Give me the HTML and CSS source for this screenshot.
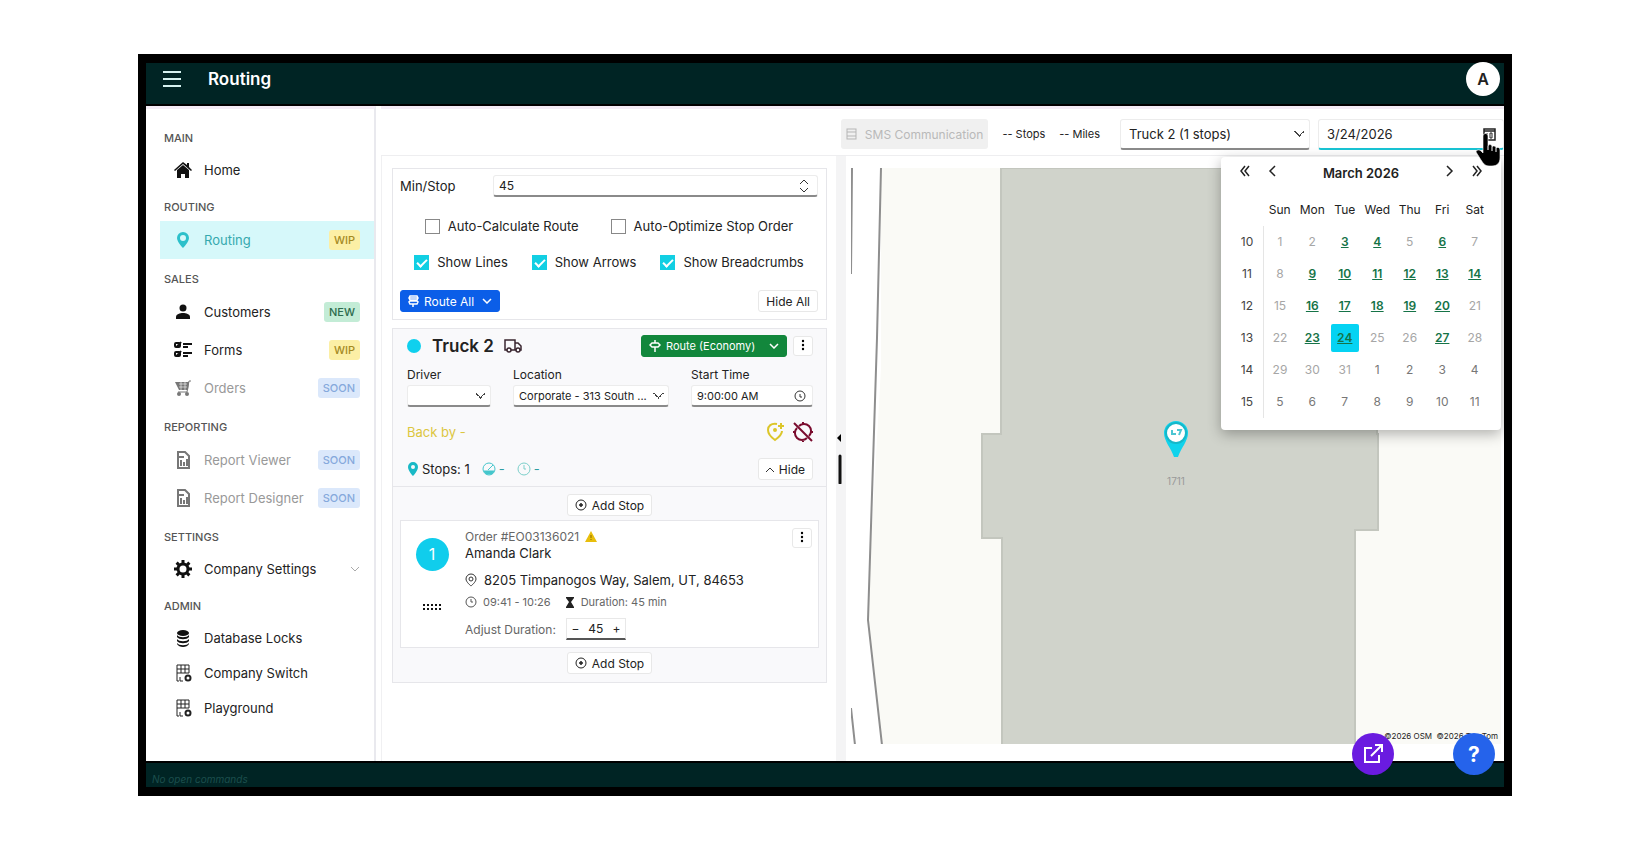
FILE: index.html
```html
<!DOCTYPE html>
<html lang="en">
<head>
    <meta charset="UTF-8">
    <meta name="viewport" content="width=device-width, initial-scale=1.0">
    <title>Routing</title>

    <link rel="stylesheet" href="styles.css">
</head>
<body>
  <div class="app">

    <header class="header">
      <button type="button" class="menu-btn" aria-label="Menu">
        <svg width="20" height="18" viewBox="0 0 20 18" stroke="#d5f2f0" stroke-width="2"><path d="M1 2h18M1 9h18M1 16h18"/></svg>
      </button>
      <h1>Routing</h1>
      <button type="button" class="avatar">A</button>
    </header>

    <div class="body">
      <nav class="sidebar">
        <h2>MAIN</h2>
        <a href="#" class="item">
          <svg class="icon" viewBox="0 0 18 18"><path d="M9 1 0 9l1 1 8-7 8 7 1-1-3-3V2h-2v2z"/><path d="M9 4 3 9v8h4v-4h4v4h4V9z"/></svg>
          <span>Home</span>
        </a>

        <h2>ROUTING</h2>
        <a href="#" class="item tagged active">
          <svg class="icon" viewBox="0 0 18 18"><path fill-rule="evenodd" d="M9 1a6 6 0 0 0-6 6c0 4 6 10 6 10s6-6 6-10a6 6 0 0 0-6-6zm0 3a3 3 0 1 1 0 6 3 3 0 0 1 0-6z"/></svg>
          <span>Routing</span>
          <b class="tag wip">WIP</b>
        </a>

        <h2>SALES</h2>
        <a href="#" class="item tagged">
          <svg class="icon" viewBox="0 0 18 18"><circle cx="9" cy="5" r="3.500"/><path d="M2 16v-2c0-3 4-4 7-4s7 1 7 4v2z"/></svg>
          <span>Customers</span>
          <b class="tag new">NEW</b>
        </a>
        <a href="#" class="item tagged">
          <svg class="icon" viewBox="0 0 18 18"><g fill="none" stroke="#111" stroke-width="2"><rect x="1" y="2" width="5" height="4" rx="1"/><rect x="1" y="11" width="5" height="4" rx="1"/><path d="M3 4l1 1 3-4M3 13l1 1 3-4M9 3h9M9 6h5M9 12h9M9 15h5"/></g></svg>
          <span>Forms</span>
          <b class="tag wip">WIP</b>
        </a>
        <a href="#" class="item tagged disabled">
          <svg class="icon" viewBox="0 0 18 18"><path d="M1 3h14l-1 8H5z"/><path d="M17 2h-2l-2 11H4" fill="none" stroke="#777" stroke-width="1"/><circle cx="5" cy="15" r="2"/><circle cx="13" cy="15" r="2"/><path d="M5 5h8M5 8h8M7 3v8M11 3v8" stroke="#fff" stroke-width=".6"/></svg>
          <span>Orders</span>
          <b class="tag soon">SOON</b>
        </a>

        <h2>REPORTING</h2>
        <a href="#" class="item tagged disabled">
          <svg class="icon" viewBox="0 0 18 18"><g fill="none" stroke="#777" stroke-width="2"><path d="M4 1h7l4 4v12H4zM7 15V9M10 15v-4M13 15V8M4 6h6"/></g></svg>
          <span>Report Viewer</span>
          <b class="tag soon">SOON</b>
        </a>
        <a href="#" class="item tagged disabled">
          <svg class="icon" viewBox="0 0 18 18"><g fill="none" stroke="#777" stroke-width="2"><path d="M4 1h7l4 4v12H4zM7 15V9M10 15v-4M13 15V8M4 6h6"/></g></svg>
          <span>Report Designer</span>
          <b class="tag soon">SOON</b>
        </a>

        <h2>SETTINGS</h2>
        <a href="#" class="item">
          <svg class="icon" viewBox="0 0 18 18"><circle cx="9" cy="9" r="5" fill="none" stroke="#111" stroke-width="3"/><path d="M9 0v4M9 14v4M0 9h4M14 9h4M2.600 2.600l3 3M12.400 12.400l3 3M2.600 15.400l3-3M12.400 5.600l3-3" stroke="#111" stroke-width="3"/></svg>
          <span>Company Settings</span>
          <svg class="chevron" width="10" height="6" viewBox="0 0 10 6" fill="none" stroke="#aaa"><path d="M1 1l4 4 4-4"/></svg>
        </a>

        <h2>ADMIN</h2>
        <a href="#" class="item">
          <svg class="icon" viewBox="0 0 18 18"><ellipse cx="9" cy="4" rx="6" ry="3"/><path d="M3 6c2 3 10 3 12 0v2c-2 3-10 3-12 0zM3 10c2 3 10 3 12 0v2c-2 3-10 3-12 0zM3 14c2 3 10 3 12 0v1c-2 4-10 4-12 0z"/></svg>
          <span>Database Locks</span>
        </a>
        <a href="#" class="item">
          <svg class="icon" viewBox="0 0 18 18"><g fill="none" stroke="#222"><path d="M3 17V1h12v8M3 5h12M3 9h12M7 1v8M11 1v8M3 17h2M6 13v4h3"/><circle cx="14" cy="14" r="2.500" stroke-width="2"/></g></svg>
          <span>Company Switch</span>
        </a>
        <a href="#" class="item">
          <svg class="icon" viewBox="0 0 18 18"><g fill="none" stroke="#222"><path d="M3 17V1h12v8M3 5h12M3 9h12M7 1v8M11 1v8M3 17h2M6 13v4h3"/><circle cx="14" cy="14" r="2.500" stroke-width="2"/></g></svg>
          <span>Playground</span>
        </a>
      </nav>

      <main class="main">
        <div class="toolbar">
          <button type="button" class="sms" disabled>
            <svg width="11" height="12" viewBox="0 0 11 12" fill="none" stroke="#b5b5b5"><rect x="1" y="1" width="9" height="10"/><path d="M1 4h9M1 8h9"/></svg>
            SMS Communication
          </button>
          <span class="stat">-- Stops</span>
          <span class="stat">-- Miles</span>
          <select class="field truck-select" aria-label="Truck">
            <option>Truck 2 (1 stops)</option>
          </select>
          <div class="date">
            <input type="text" class="field date-input" value="3/24/2026" aria-label="Date">
            <button type="button" class="date-btn" aria-label="Open calendar">
              <svg width="13" height="14" viewBox="0 0 13 14" fill="none" stroke="#222"><path d="M1 2h11v11H1zM1 4h11" stroke-width="1.500"/><path d="M4 6v5M7 6h2v5H7z"/></svg>
            </button>

            <div class="calendar">
              <div class="cal-head">
                <button type="button" aria-label="Previous year"><svg width="12" height="12" viewBox="0 0 12 12"><path d="M6 1 2 6l4 5M10 1 6 6l4 5"/></svg></button>
                <button type="button" aria-label="Previous month"><svg width="12" height="12" viewBox="0 0 12 12"><path d="M8 1 3 6l5 5"/></svg></button>
                <strong>March 2026</strong>
                <button type="button" aria-label="Next month"><svg width="12" height="12" viewBox="0 0 12 12"><path d="M4 1l5 5-5 5"/></svg></button>
                <button type="button" aria-label="Next year"><svg width="12" height="12" viewBox="0 0 12 12"><path d="M2 1l4 5-4 5M6 1l4 5-4 5"/></svg></button>
              </div>
              <table>
                <thead>
                  <tr><th></th><th>Sun</th><th>Mon</th><th>Tue</th><th>Wed</th><th>Thu</th><th>Fri</th><th>Sat</th></tr>
                </thead>
                <tbody>
                  <tr><th>10</th><td>1</td><td>2</td><td class="on">3</td><td class="on">4</td><td>5</td><td class="on">6</td><td>7</td></tr>
                  <tr><th>11</th><td>8</td><td class="on">9</td><td class="on">10</td><td class="on">11</td><td class="on">12</td><td class="on">13</td><td class="on">14</td></tr>
                  <tr><th>12</th><td>15</td><td class="on">16</td><td class="on">17</td><td class="on">18</td><td class="on">19</td><td class="on">20</td><td>21</td></tr>
                  <tr><th>13</th><td>22</td><td class="on">23</td><td class="on today"><span>24</span></td><td>25</td><td>26</td><td class="on">27</td><td>28</td></tr>
                  <tr><th>14</th><td>29</td><td>30</td><td>31</td><td class="next">1</td><td class="next">2</td><td class="next">3</td><td class="next">4</td></tr>
                  <tr><th>15</th><td class="next">5</td><td class="next">6</td><td class="next">7</td><td class="next">8</td><td class="next">9</td><td class="next">10</td><td class="next">11</td></tr>
                </tbody>
              </table>
            </div>

            <svg class="cursor" viewBox="0 0 27 34"><path d="M7 3a2 2 0 0 1 5 0v10c1-2 4-2 4 1 1-2 4-1 4 1 1-1 4-1 4 2v8c0 5-3 8-8 8h-3c-4 0-6-3-8-6l-5-8c0-2 3-3 5-1l2 2z" stroke="#fff" stroke-width=".6"/><path d="M12 13v4M16 14v4M20 15v4" stroke="#fff" fill="none"/></svg>
          </div>
        </div>

        <div class="content">
          <div class="panel">
            <section class="card options">
              <div class="min-row">
                <label for="min-stop">Min/Stop</label>
                <div class="spin">
                  <input type="text" class="field" id="min-stop" value="45">
                  <svg width="10" height="14" viewBox="0 0 10 14" fill="none" stroke="#333"><path d="M1 5l4-4 4 4M1 9l4 4 4-4"/></svg>
                </div>
              </div>
              <div class="checks wide">
                <label><input type="checkbox"> Auto-Calculate Route</label>
                <label><input type="checkbox"> Auto-Optimize Stop Order</label>
              </div>
              <div class="checks">
                <label><input type="checkbox" checked> Show Lines</label>
                <label><input type="checkbox" checked> Show Arrows</label>
                <label><input type="checkbox" checked> Show Breadcrumbs</label>
              </div>
              <div class="row">
                <button type="button" class="btn blue">
                  <svg width="11" height="12" viewBox="0 0 11 12" fill="none" stroke="#fff"><path d="M2 1h7l1 2-1 2H2L1 3zM2 6h7l1 1-1 2H2L1 7zM5 9v3M1 3h9" stroke-width="1.500"/></svg>
                  Route All
                  <svg class="end" width="10" height="6" viewBox="0 0 10 6" fill="none" stroke="#fff" stroke-width="1.500"><path d="M1 1l4 4 4-4"/></svg>
                </button>
                <button type="button" class="btn">Hide All</button>
              </div>
            </section>

            <section class="card truck">
              <div class="truck-info">
                <div class="row">
                  <i class="dot"></i>
                  <h3>Truck 2</h3>
                  <svg class="truck-icon" width="18" height="14" viewBox="0 0 18 14" fill="none" stroke="#3a2630" stroke-width="1.500"><path d="M3 11H1V1h10v10H7M11 4h3l3 3v4h-1M12 11h-1"/><circle cx="5" cy="11" r="2"/><circle cx="14" cy="11" r="2"/></svg>
                  <button type="button" class="btn green">
                    <svg width="12" height="12" viewBox="0 0 12 12" fill="none" stroke="#fff" stroke-width="1.500"><path d="M3 3h6l2 2-2 2H3L1 5zM6 0v3M6 7v5"/></svg>
                    Route (Economy)
                    <svg class="end" width="10" height="6" viewBox="0 0 10 6" fill="none" stroke="#fff" stroke-width="1.500"><path d="M1 1l4 4 4-4"/></svg>
                  </button>
                  <button type="button" class="kebab" aria-label="Truck menu"><svg width="4" height="12" viewBox="0 0 4 12"><circle cx="2" cy="2" r="1.200"/><circle cx="2" cy="6" r="1.200"/><circle cx="2" cy="10" r="1.200"/></svg></button>
                </div>

                <div class="fields">
                  <div>
                    <label for="driver">Driver</label>
                    <select class="field" id="driver"><option></option></select>
                  </div>
                  <div>
                    <label for="location">Location</label>
                    <select class="field" id="location"><option>Corporate - 313 South ...</option></select>
                  </div>
                  <div>
                    <label for="start">Start Time</label>
                    <div class="spin">
                      <input type="text" class="field" id="start" value="9:00:00 AM">
                      <svg width="12" height="12" viewBox="0 0 12 12" fill="none" stroke="#333"><circle cx="6" cy="6" r="5"/><path d="M6 4v3h2"/></svg>
                    </div>
                  </div>
                </div>

                <div class="row back">
                  <span>Back by -</span>
                  <svg width="20" height="20" viewBox="0 0 20 20" fill="none" stroke="#dcc62a" stroke-width="2"><path d="M12 2C6 1 3 4 3 8c0 5 7 10 7 10s7-5 7-9"/><circle cx="10" cy="8" r="1"/><path d="M16 1v6M13 4h6"/></svg>
                  <svg width="20" height="20" viewBox="0 0 20 20" fill="none" stroke="#7a0c2e" stroke-width="2"><path d="M6 4a7 7 0 0 1 10 10M14 16A7 7 0 0 1 4 6M1 1l18 18M10 0v3M10 17v3M0 10h3M17 10h3"/></svg>
                </div>

                <div class="row stops">
                  <svg width="12" height="14" viewBox="0 0 12 14"><path fill="#19b9c6" fill-rule="evenodd" d="M6 0a5 5 0 0 0-5 5c0 4 5 9 5 9s5-5 5-9a5 5 0 0 0-5-5zm0 3a2 2 0 1 1 0 4 2 2 0 0 1 0-4z"/></svg>
                  <span class="count">Stops: 1</span>
                  <svg width="14" height="14" viewBox="0 0 14 14" fill="none" stroke="#45c6cc"><circle cx="7" cy="7" r="6"/><path d="M6 8l5-5"/><path d="M2 9h10l-2 3H4z" fill="#45c6cc"/></svg>
                  <span class="dash">-</span>
                  <svg width="14" height="14" viewBox="0 0 14 14" fill="none" stroke="#7ccfca"><circle cx="7" cy="7" r="6"/><path d="M7 3v4h2"/></svg>
                  <span class="dash">-</span>
                  <button type="button" class="btn hide">
                    <svg width="8" height="5" viewBox="0 0 8 5" fill="none" stroke="#333"><path d="M0 5l4-4 4 4"/></svg>
                    Hide
                  </button>
                </div>
              </div>

              <div class="stop-list">
                <button type="button" class="btn add"><svg width="12" height="12" viewBox="0 0 12 12" fill="none" stroke="#222"><circle cx="6" cy="6" r="5"/><path d="M6 4v4M4 6h4" stroke-width="1.500"/></svg>Add Stop</button>

                <article class="stop">
                  <div class="stop-side">
                    <span class="num">1</span>
                    <svg width="20" height="8" viewBox="0 0 20 8" stroke="#111" stroke-width="2" stroke-dasharray="2 2"><path d="M1 2h19M1 6h19"/></svg>
                  </div>
                  <div class="stop-body">
                    <div class="order">Order #EO03136021
                      <svg width="12" height="11" viewBox="0 0 12 11"><path d="M6 0 0 11h12z" fill="#e8be0c"/><path d="M6 4v3M6 8v1" stroke="#8a6d00"/></svg>
                    </div>
                    <div class="name">Amanda Clark</div>
                    <div class="address">
                      <svg width="12" height="14" viewBox="0 0 12 14" fill="none" stroke="#333"><path d="M6 1a5 5 0 0 0-5 5c0 3 5 7 5 7s5-4 5-7a5 5 0 0 0-5-5z"/><circle cx="6" cy="6" r="2"/></svg>
                      8205 Timpanogos Way, Salem, UT, 84653
                    </div>
                    <div class="times">
                      <svg width="12" height="12" viewBox="0 0 12 12" fill="none" stroke="#555"><circle cx="6" cy="6" r="5"/><path d="M6 3v3h2"/></svg>
                      <span>09:41 - 10:26</span>
                      <svg width="10" height="11" viewBox="0 0 10 11"><path d="M1 0h8v1L6 5l3 5v1H1v-1l3-5-3-4z" fill="#222"/></svg>
                      <span>Duration: 45 min</span>
                    </div>
                    <div class="adjust">
                      <label for="adjust">Adjust Duration:</label>
                      <div class="stepper">
                        <button type="button" aria-label="Less">−</button>
                        <input type="text" id="adjust" value="45">
                        <button type="button" aria-label="More">+</button>
                      </div>
                    </div>
                  </div>
                  <button type="button" class="kebab" aria-label="Stop menu"><svg width="4" height="12" viewBox="0 0 4 12"><circle cx="2" cy="2" r="1.200"/><circle cx="2" cy="6" r="1.200"/><circle cx="2" cy="10" r="1.200"/></svg></button>
                </article>

                <button type="button" class="btn add"><svg width="12" height="12" viewBox="0 0 12 12" fill="none" stroke="#222"><circle cx="6" cy="6" r="5"/><path d="M6 4v4M4 6h4" stroke-width="1.500"/></svg>Add Stop</button>
              </div>
            </section>
          </div>

          <div class="splitter">
            <svg width="6" height="50" viewBox="0 0 6 50"><path d="M5 0v8L1 4z"/><path d="M4 22v27" stroke="#111" stroke-width="3" stroke-linecap="round"/></svg>
          </div>

          <div class="map">
            <svg class="map-art" viewBox="0 0 650 577" preserveAspectRatio="xMinYMin slice">
              <path d="M0 0h30v200L16 450l15 127H0z" fill="#fff"/>
              <path d="M1 0 0 106M0 540l4 37M30 0l-4 170-9 282 14 125" fill="none" stroke="#8e8e8e" stroke-width="2"/>
              <path d="M150 0h376v266h1v96h-23v215H151V370h-20V266h19z" fill="#d0d3cb" stroke="#c3c6be" stroke-width="2"/>
            </svg>
            <div class="pin">
              <svg width="24" height="36" viewBox="0 0 24 36"><path d="M12 0A12 12 0 0 0 0 12c0 8 7 15 10 24h4c3-9 10-16 10-24A12 12 0 0 0 12 0z" fill="#10d3ec"/><circle cx="12" cy="12" r="10" fill="#fff" stroke="#16b7c9" stroke-width="2"/><path d="M8 9v4h4M13 9h4l-2 5" stroke="#4cc5d2" fill="none" stroke-width="2"/></svg>
              <span>1711</span>
            </div>
            <div class="credit">©2026 OSM&nbsp; ©2026 TomTom</div>
          </div>
        </div>
      </main>
    </div>

    <footer class="footer">No open commands</footer>

    <div class="fabs">
      <button type="button" class="fab purple" aria-label="Open in new window"><svg width="20" height="20" viewBox="0 0 20 20" fill="none" stroke="#fff" stroke-width="2"><path d="M9 4H2v14h14v-7M12 1h7v7M19 1 8 12"/></svg></button>
      <button type="button" class="fab help">?</button>
    </div>
  </div>
</body>
</html>
```

FILE: styles.css
```css
*{
  margin: 0;
  padding: 0;
  box-sizing: border-box;
}

body{
  min-height: 100vh;
  display: flex;
  padding: 54px 138px;
  background-color: white;
  color: #222;
  font-family: Inter, "Open Sans", sans-serif;
  font-size: 13px;
}

button, input, select{
  font-family: inherit;
  font-size: 12px;
  color: inherit;
}

button{
  background: none;
  border: none;
  cursor: pointer;
}

a{
  color: inherit;
  text-decoration: none;
}

.app{
  position: relative;
  flex: 1;
  display: flex;
  flex-direction: column;
  border: 9px solid black;
  border-width: 9px 8px;
}

.header{
  display: flex;
  align-items: center;
  height: 43px;
  padding: 0 4px 10px 16px;
  background-color: #002424;
  border-bottom: 2px solid black;
}

.menu-btn{
  display: flex;
}

h1{
  flex: 1;
  margin-left: 26px;
  color: white;
  font-size: 17px;
  font-weight: 600;
}

.avatar{
  width: 34px;
  height: 34px;
  border-radius: 50%;
  background-color: white;
  font-size: 16px;
  font-weight: 600;
}

.body{
  flex: 1;
  display: flex;
}

/* sidebar */

.sidebar{
  width: 230px;
  padding: 16px 0 0 14px;
  border-right: 2px solid #e9e9ee;
  border-top: 3px solid #f4ecf6;
}

.sidebar h2{
  height: 27px;
  margin-top: 7px;
  padding-left: 4px;
  line-height: 27px;
  color: #555;
  font-size: 11px;
  font-weight: 500;
}

.sidebar h2:first-child{
  margin-top: 0;
}

.item{
  display: flex;
  align-items: center;
  height: 35px;
  padding: 0 14px;
}

.item span{
  flex: 1;
  margin-left: 12px;
  white-space: nowrap;
}

.item.tagged{
  height: 38px;
}

.icon{
  width: 18px;
  height: 18px;
  flex: none;
  fill: #111;
}

.active{
  background-color: #d6f8fa;
  color: #35a9ae;
}

.active .icon{
  fill: #2cc0ca;
}

.disabled{
  color: #999;
}

.disabled .icon{
  fill: #777;
}

.tag{
  height: 20px;
  padding: 0 5px;
  border-radius: 3px;
  line-height: 20px;
  font-size: 11px;
  font-weight: 500;
}

.wip{
  background-color: #fcefa5;
  color: #a58a1f;
}

.new{
  background-color: #c3ecd6;
  color: #2d6b4d;
}

.soon{
  background-color: #dbe8fb;
  color: #86a9dc;
}

/* top toolbar */

.main{
  flex: 1;
  min-width: 0;
  display: flex;
  flex-direction: column;
  margin-left: 5px;
}

.toolbar{
  display: flex;
  align-items: center;
  justify-content: flex-end;
  height: 50px;
  padding-top: 4px;
  border-top: 3px solid #f4ecf6;
  border-bottom: 1px solid #eeeef0;
}

.field{
  width: 100%;
  height: 22px;
  padding: 0 5px;
  background-color: white;
  border: 1px solid #ececec;
  border-bottom: 2px solid #8a8a8a;
  border-radius: 3px;
  outline: none;
}

select.field{
  appearance: none;
  background-image: linear-gradient(45deg, transparent 50%, #444 50%, #444 60%, transparent 60%), linear-gradient(-45deg, transparent 50%, #444 50%, #444 60%, transparent 60%);
  background-repeat: no-repeat;
  background-size: 6px 6px;
  background-position: right 9px center, right 4px center;
}

.sms{
  display: flex;
  align-items: center;
  gap: 8px;
  height: 30px;
  padding: 0 5px;
  background-color: #f0f0f0;
  color: #b9b9b9;
  border-radius: 3px;
  white-space: nowrap;
}

.stat{
  margin-left: 14px;
  font-size: 11px;
}

.toolbar .field{
  height: 31px;
  padding: 0 8px;
  font-size: 13px;
}

.toolbar .truck-select{
  width: 190px;
  margin-left: 20px;
}

.date{
  position: relative;
  display: flex;
  width: 186px;
  margin-left: 8px;
}

.toolbar .date-input{
  border-bottom-color: #19c4d4;
}

.date-btn{
  position: absolute;
  right: 8px;
  top: 8px;
}

.cursor{
  position: absolute;
  right: 1px;
  top: 14px;
  width: 27px;
  height: 34px;
  z-index: 3;
}

/* calendar drop-down */

.calendar{
  position: absolute;
  top: 38px;
  right: 3px;
  z-index: 2;
  width: 280px;
  padding: 0 10px 12px;
  background-color: white;
  border-radius: 4px;
  box-shadow: 0 4px 14px rgba(0, 0, 0, .3);
}

.cal-head{
  display: flex;
  align-items: center;
  height: 32px;
}

.cal-head button{
  width: 28px;
  text-align: center;
}

.cal-head strong{
  flex: 1;
  text-align: center;
  font-weight: 600;
}

.cal-head path{
  fill: none;
  stroke: #222;
  stroke-width: 1.5;
}

.calendar table{
  width: 100%;
  border-collapse: collapse;
  table-layout: fixed;
}

.calendar th, .calendar td{
  height: 32px;
  text-align: center;
  font-weight: 400;
  font-size: 12px;
}

.calendar thead th{
  height: 37px;
  padding-top: 4px;
}

.calendar tbody th{
  border-right: 1px solid #e5e5e5;
  color: #444;
}

.calendar td{
  color: #a6a6a6;
}

.calendar .next{
  color: #777;
}

.calendar .on{
  color: #157347;
  font-weight: 600;
  text-decoration: underline;
}

.today span{
  display: block;
  height: 28px;
  margin: 0 2px;
  line-height: 28px;
  border-radius: 2px;
  background-color: #05d3f3;
}

/* left panel */

.content{
  flex: 1;
  display: flex;
}

.panel{
  flex: 0 0 455px;
  padding: 12px 9px 12px 10px;
  border-left: 1px solid #f0f0f2;
}

.card{
  border: 1px solid #e6e6ea;
}

.options{
  padding: 6px 8px 7px 7px;
}

.min-row{
  display: flex;
  align-items: center;
}

.min-row label{
  width: 93px;
}

.spin{
  flex: 1;
  display: flex;
  align-items: center;
}

.spin svg{
  flex: none;
  margin-left: -19px;
}

.checks{
  display: flex;
  align-items: center;
  justify-content: center;
  gap: 24px;
  height: 36px;
}

.checks.wide{
  gap: 32px;
  margin-top: 11px;
}

.checks label{
  display: flex;
  align-items: center;
  gap: 8px;
}

.checks input{
  appearance: none;
  width: 15px;
  height: 15px;
  border: 1px solid #888;
}

.checks input:checked{
  border-color: #12cfe3;
  background-color: #12cfe3;
}

.checks input:checked::before{
  content: "";
  display: block;
  width: 8px;
  height: 4px;
  margin: 3px 0 0 2px;
  border-left: 2px solid white;
  border-bottom: 2px solid white;
  transform: rotate(-45deg);
}

.row{
  display: flex;
  align-items: center;
}

.options .row{
  justify-content: space-between;
  margin-top: 10px;
}

.btn{
  display: flex;
  align-items: center;
  gap: 5px;
  height: 22px;
  padding: 0 7px;
  background-color: white;
  border: 1px solid #e8e8e8;
  border-radius: 3px;
}

.btn .end{
  margin-left: auto;
}

.blue{
  width: 100px;
  background-color: #0b5ee8;
  border-color: #0b5ee8;
  color: white;
}

.green{
  width: 146px;
  margin-left: auto;
  background-color: #12873c;
  border-color: #12873c;
  color: white;
  font-size: 11px;
}

.kebab{
  width: 20px;
  height: 20px;
  border: 1px solid #e8e8e8;
  border-radius: 3px;
  background-color: white;
}

.truck{
  margin-top: 8px;
  background-color: #f9f9fb;
}

.truck-info{
  padding: 6px 13px 0 14px;
}

.dot{
  width: 14px;
  height: 14px;
  border-radius: 50%;
  background-color: #0fd0ee;
}

h3{
  margin-left: 11px;
  font-size: 17px;
  font-weight: 600;
}

.truck-icon{
  margin-left: 10px;
}

.green + .kebab{
  margin-left: 6px;
}

.fields{
  display: grid;
  grid-template-columns: 84px 1fr 122px;
  gap: 22px;
  margin-top: 10px;
}

.fields label{
  display: block;
  height: 18px;
  font-size: 12px;
}

.fields .field{
  font-size: 11px;
}

.back{
  gap: 8px;
  height: 32px;
  margin-top: 9px;
}

.back span{
  flex: 1;
  color: #dcc640;
}

.stops{
  height: 34px;
  margin-top: 4px;
}

.count{
  margin: 0 12px 0 3px;
}

.dash{
  margin: 0 12px 0 3px;
  color: #2f9ea3;
}

.hide{
  margin-left: auto;
}

/* stops */

.stop-list{
  display: flex;
  flex-direction: column;
  align-items: center;
  gap: 4px;
  padding: 7px 7px 8px;
  border-top: 1px solid #e6e6ea;
}

.stop{
  align-self: stretch;
  display: flex;
  padding: 7px 6px 7px 14px;
  background-color: white;
  border: 1px solid #e6e6ea;
}

.stop-side{
  display: flex;
  flex-direction: column;
  align-items: center;
  gap: 32px;
  width: 34px;
  padding-top: 10px;
}

.num{
  width: 33px;
  height: 33px;
  border-radius: 50%;
  background-color: #10cdec;
  color: white;
  line-height: 33px;
  text-align: center;
  font-size: 16px;
}

.stop-body{
  flex: 1;
  margin-left: 16px;
}

.order, .times, .adjust{
  display: flex;
  align-items: center;
  gap: 6px;
  color: #666;
  font-size: 12px;
}

.order{
  height: 17px;
}

.name{
  height: 23px;
  line-height: 17px;
}

.address{
  display: flex;
  align-items: center;
  gap: 7px;
  height: 24px;
}

.times{
  height: 20px;
  font-size: 11px;
}

.times span + svg{
  margin-left: 8px;
}

.adjust{
  margin-top: 6px;
}

.stepper{
  display: flex;
  width: 60px;
  height: 22px;
  margin-left: 4px;
  border: 1px solid #e8e8e8;
  border-bottom: 2px solid #555;
  color: #222;
}

.stepper button{
  width: 17px;
}

.stepper input{
  flex: 1;
  min-width: 0;
  border: none;
  text-align: center;
}

.splitter{
  display: flex;
  align-items: center;
  width: 10px;
  background-color: #f4f4f5;
}

/* map */

.map{
  position: relative;
  flex: 1;
  margin: 12px 3px 17px 5px;
  overflow: hidden;
  background-color: #fafaf6;
}

.map-art{
  position: absolute;
  width: 100%;
  height: 100%;
}

.pin{
  position: absolute;
  left: 50%;
  top: 44%;
  display: flex;
  flex-direction: column;
  align-items: center;
  gap: 18px;
  transform: translateX(-50%);
  color: #999;
  font-size: 10px;
}

.credit{
  position: absolute;
  right: 3px;
  bottom: 3px;
  font-size: 8px;
}

.footer{
  height: 26px;
  padding: 0 6px;
  background-color: #002424;
  border-top: 2px solid black;
  color: #1c4f4d;
  line-height: 32px;
  font-size: 10px;
  font-style: italic;
}

.fabs{
  position: absolute;
  right: 9px;
  bottom: 12px;
  z-index: 4;
  display: flex;
  gap: 59px;
}

.fab{
  display: flex;
  align-items: center;
  justify-content: center;
  width: 42px;
  height: 42px;
  border-radius: 50%;
}

.purple{
  background-color: #6a1be0;
}

.help{
  background-color: #2563eb;
  color: white;
  font-size: 21px;
  font-weight: 700;
}
```
